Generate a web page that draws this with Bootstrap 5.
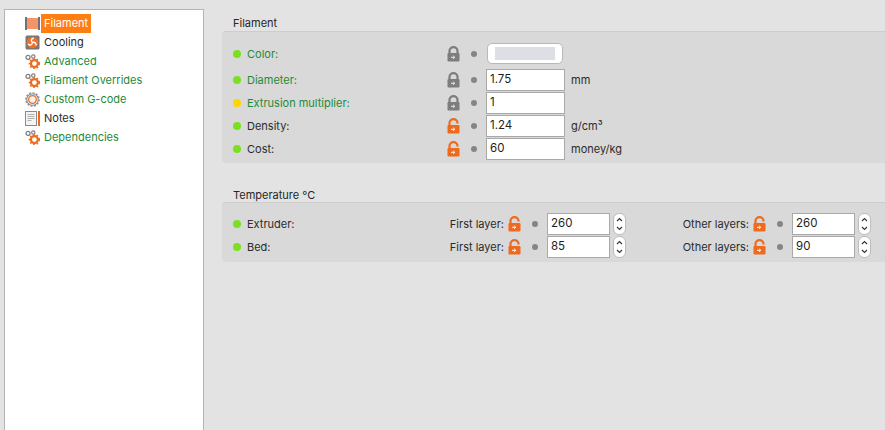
<!doctype html>
<html lang="en">
<head>
<meta charset="utf-8">
<title>Filament settings</title>
<link rel="stylesheet" href="https://cdn.jsdelivr.net/npm/bootstrap@5.3.0/dist/css/bootstrap.min.css">
<style>
html,body{height:100%}
body{background:#e3e3e3;font-family:Inter,"Liberation Sans",sans-serif;font-size:11px;color:#2b2b2b;overflow:hidden;line-height:14px}
.shell{height:430px}
.tree{width:200px;margin:9px 0 0 4px;background:#fff;border:1px solid #b4b4b4;border-bottom:0;padding:4px 0 0 20px;flex:none}
.tree-item{height:19px;gap:1px}
.tree-item svg{width:15px;height:15px;flex:none}
.tree-label{padding:0 3px;height:19px;line-height:19px}
.tree-active{background:#fd7e12;color:#fff}
.modified{color:#1f8a3b}
.pane{margin-left:18px;flex:1;min-width:0;padding-top:16px}
.group-title{height:15px;padding-left:11px;line-height:15px;color:#262626}
.group-gap{margin-top:25px;height:14px}
.group-body{background:#d9d9d9;border-top:1px solid #cdcdcd;border-radius:4px 0 0 4px;padding:0 0 0 11px}
.group-one{height:132px;padding-top:11px}
.group-temp{height:60px;padding-top:9px}
.opt-row{height:23px}
.opt-first{height:25px;padding-bottom:4px}
.status{width:8px;height:8px;border-radius:50%;background:#7ae020;flex:none;margin-right:6px}
.status-warn{background:#ffd500}
.opt-name{width:200px;flex:none}
.opt-short{width:185px}
.lock{width:13px;height:16px;flex:none;color:#7d7d7d}
.lock-open{color:#ee6a1f}
.revert{width:6px;height:6px;border-radius:50%;background:#858585;flex:none;margin:0 9px 0 11px}
.field{width:79px;height:22px;background:#fff;border:1px solid #a9a9a9;padding:0 3px;font-size:11.5px;line-height:19px;color:#1d1d1d;flex:none}
.field-num{width:63px}
.unit{margin-left:6px}
.swatch{width:76px;height:21px;margin-left:1px;background:#fff;border:1px solid #b9b9b9;border-radius:5px;padding:3px 7px;flex:none}
.swatch-fill{background:#dedfe4;height:100%}
.spin{width:13px;height:22px;margin-left:3px;background:#fff;border:1px solid #bcbcbc;border-radius:6px;flex:none}
.spin svg{display:block;width:11px;height:20px}
.layer-label{text-align:right;flex:none;margin-right:4px}
.layer-first{width:72px}
.layer-other{width:73px}
.gap-other{width:50px;flex:none}
</style>
</head>
<body>
<svg width="0" height="0" class="d-block position-absolute">
<defs>
<symbol id="i-lock" viewBox="0 0 13 16">
<path d="M2.500 8V5a4 3.800 0 0 1 8 0V8" fill="none" stroke="currentColor" stroke-width="2.200"/>
<rect x="0.500" y="7" width="12" height="8.500" rx="1.200" fill="currentColor"/>
<path d="M4 11.300h3.500M6.200 9.800l1.600 1.500-1.600 1.500" fill="none" stroke="#eee" stroke-width="1"/>
</symbol>
<symbol id="i-open" viewBox="0 0 13 16">
<path d="M2.500 8V4.800a4 3.600 0 0 1 8 0V5.500" fill="none" stroke="currentColor" stroke-width="2.200"/>
<rect x="0.500" y="7" width="12" height="8.500" rx="1.200" fill="currentColor"/>
<path d="M4 11.300h3.500M6.200 9.800l1.600 1.500-1.600 1.500" fill="none" stroke="#fff" stroke-width="1"/>
</symbol>
<symbol id="i-gears" viewBox="0 0 15 15">
<circle cx="3" cy="3.400" r="2" fill="none" stroke="#808080" stroke-width="1.300"/>
<circle cx="8.300" cy="2.600" r="1.700" fill="none" stroke="#808080" stroke-width="1.200"/>
<circle cx="9.400" cy="9.600" r="3.500" fill="none" stroke="#ee6a1f" stroke-width="2.200"/>
<circle cx="9.400" cy="9.600" r="5" fill="none" stroke="#ee6a1f" stroke-width="1.300" stroke-dasharray="1.700 1.900"/>
</symbol>
<symbol id="i-spin" viewBox="0 0 11 20">
<path d="M3 7l2.500-2.500L8 7M3 13l2.500 2.500L8 13" fill="none" stroke="#333" stroke-width="1.100"/>
</symbol>
</defs>
</svg>
<div class="shell d-flex">
<nav class="tree">
<div class="tree-item d-flex align-items-center">
<svg viewBox="0 0 15 15"><rect x="0" y="1" width="2" height="13" fill="#6f7378"/><rect x="13" y="1" width="2" height="13" fill="#6f7378"/><rect x="2" y="2" width="11" height="11" fill="#f59468"/></svg>
<span class="tree-label tree-active">Filament</span>
</div>
<div class="tree-item d-flex align-items-center">
<svg viewBox="0 0 15 15"><rect x="0.500" y="0.500" width="14" height="14" rx="1.500" fill="#777"/><circle cx="7.500" cy="7.500" r="5.800" fill="#f0702a"/><path d="M7.500 7.500C5.800 6 6 3.300 8.800 3.200M7.500 7.500C9.800 6.800 11.800 8.300 11 10.600M7.500 7.500C7.200 9.800 4.800 11 3.300 8.800" fill="none" stroke="#fff" stroke-width="1.400"/></svg>
<span class="tree-label">Cooling</span>
</div>
<div class="tree-item d-flex align-items-center">
<svg><use href="#i-gears"/></svg>
<span class="tree-label modified">Advanced</span>
</div>
<div class="tree-item d-flex align-items-center">
<svg><use href="#i-gears"/></svg>
<span class="tree-label modified">Filament Overrides</span>
</div>
<div class="tree-item d-flex align-items-center">
<svg viewBox="0 0 15 15"><circle cx="7.500" cy="7.500" r="5.800" fill="#f4f4f4" stroke="#8a8a8a" stroke-width="1.100"/><circle cx="7.500" cy="7.500" r="6.700" fill="none" stroke="#8a8a8a" stroke-width="1.300" stroke-dasharray="1.800 1.700"/><circle cx="7.500" cy="7.500" r="3.800" fill="none" stroke="#ee6a1f" stroke-width="1.300"/></svg>
<span class="tree-label modified">Custom G-code</span>
</div>
<div class="tree-item d-flex align-items-center">
<svg viewBox="0 0 15 15"><rect x="0.500" y="0.500" width="11" height="14" fill="#f4f4f4" stroke="#8a8a8a"/><path d="M2.500 3.500h7M2.500 5.500h7M2.500 7.500h7M2.500 9.500h4" stroke="#b0b0b0" stroke-width="1.100"/><rect x="13" y="0" width="2" height="15" fill="#ee6a1f"/></svg>
<span class="tree-label">Notes</span>
</div>
<div class="tree-item d-flex align-items-center">
<svg><use href="#i-gears"/></svg>
<span class="tree-label modified">Dependencies</span>
</div>
</nav>
<main class="pane">
<div class="group-title">Filament</div>
<section class="group-body group-one">
<div class="opt-row opt-first d-flex align-items-center">
<span class="status"></span><span class="opt-name modified">Color:</span>
<svg class="lock"><use href="#i-lock"/></svg><span class="revert"></span>
<div class="swatch"><div class="swatch-fill"></div></div>
</div>
<div class="opt-row d-flex align-items-center">
<span class="status"></span><span class="opt-name modified">Diameter:</span>
<svg class="lock"><use href="#i-lock"/></svg><span class="revert"></span>
<div class="field">1.75</div><span class="unit">mm</span>
</div>
<div class="opt-row d-flex align-items-center">
<span class="status status-warn"></span><span class="opt-name modified">Extrusion multiplier:</span>
<svg class="lock"><use href="#i-lock"/></svg><span class="revert"></span>
<div class="field">1</div>
</div>
<div class="opt-row d-flex align-items-center">
<span class="status"></span><span class="opt-name">Density:</span>
<svg class="lock lock-open"><use href="#i-open"/></svg><span class="revert"></span>
<div class="field">1.24</div><span class="unit">g/cm³</span>
</div>
<div class="opt-row d-flex align-items-center">
<span class="status"></span><span class="opt-name">Cost:</span>
<svg class="lock lock-open"><use href="#i-open"/></svg><span class="revert"></span>
<div class="field">60</div><span class="unit">money/kg</span>
</div>
</section>
<div class="group-title group-gap">Temperature °C</div>
<section class="group-body group-temp">
<div class="opt-row d-flex align-items-center">
<span class="status"></span><span class="opt-name opt-short">Extruder:</span>
<span class="layer-label layer-first">First layer:</span>
<svg class="lock lock-open"><use href="#i-open"/></svg><span class="revert"></span>
<div class="field field-num">260</div>
<div class="spin"><svg><use href="#i-spin"/></svg></div>
<span class="gap-other"></span>
<span class="layer-label layer-other">Other layers:</span>
<svg class="lock lock-open"><use href="#i-open"/></svg><span class="revert"></span>
<div class="field field-num">260</div>
<div class="spin"><svg><use href="#i-spin"/></svg></div>
</div>
<div class="opt-row d-flex align-items-center">
<span class="status"></span><span class="opt-name opt-short">Bed:</span>
<span class="layer-label layer-first">First layer:</span>
<svg class="lock lock-open"><use href="#i-open"/></svg><span class="revert"></span>
<div class="field field-num">85</div>
<div class="spin"><svg><use href="#i-spin"/></svg></div>
<span class="gap-other"></span>
<span class="layer-label layer-other">Other layers:</span>
<svg class="lock lock-open"><use href="#i-open"/></svg><span class="revert"></span>
<div class="field field-num">90</div>
<div class="spin"><svg><use href="#i-spin"/></svg></div>
</div>
</section>
</main>
</div>
<script src="https://cdn.jsdelivr.net/npm/bootstrap@5.3.0/dist/js/bootstrap.bundle.min.js"></script>
</body>
</html>
